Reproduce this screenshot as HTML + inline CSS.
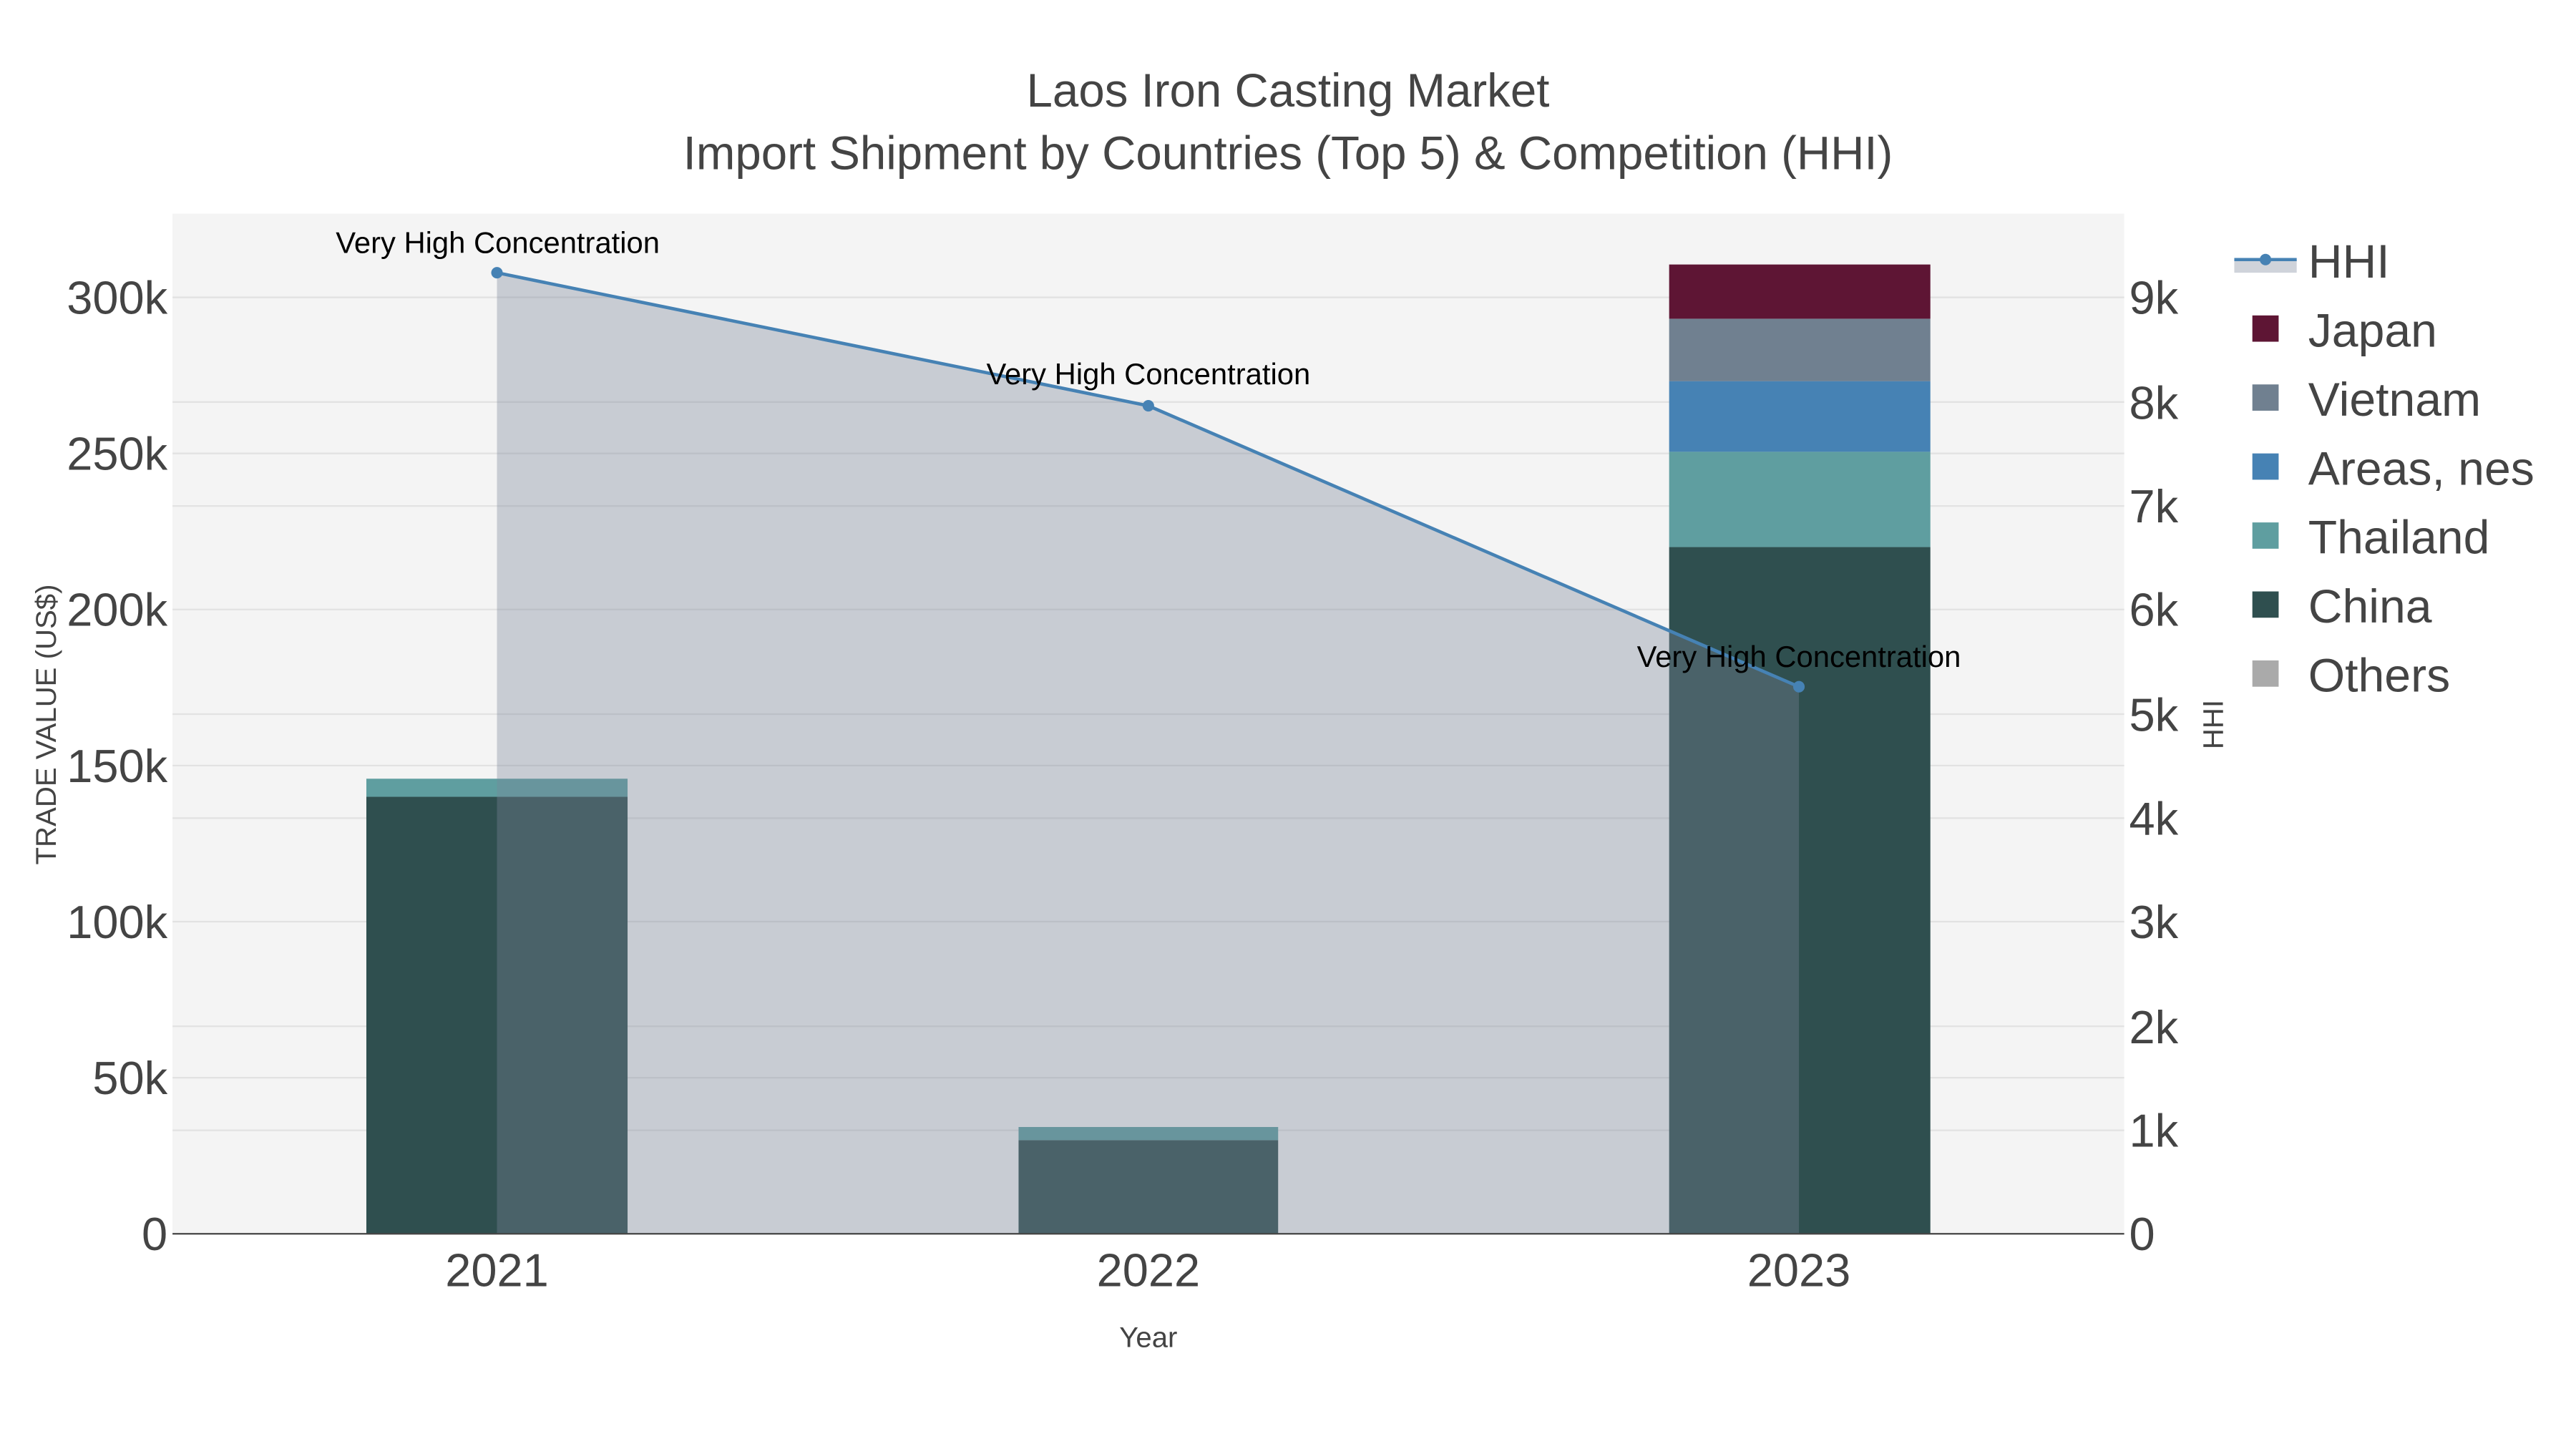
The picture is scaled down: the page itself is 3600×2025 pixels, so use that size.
<!DOCTYPE html>
<html><head><meta charset="utf-8"><style>html,body{margin:0;padding:0;background:#fff}svg{display:block}</style></head><body>
<svg width="3600" height="2025" viewBox="0 0 1568 882" xmlns="http://www.w3.org/2000/svg" font-family="Liberation Sans, sans-serif">
<rect width="1568" height="882" fill="#fff"/>
<rect x="105" y="130" width="1188" height="621" fill="#f4f4f4"/>
<g stroke="#e2e2e2" stroke-width="1">
<line x1="105" x2="1293" y1="656" y2="656"/><line x1="105" x2="1293" y1="561" y2="561"/><line x1="105" x2="1293" y1="466" y2="466"/><line x1="105" x2="1293" y1="371" y2="371"/><line x1="105" x2="1293" y1="276" y2="276"/><line x1="105" x2="1293" y1="181" y2="181"/>
<line x1="105" x2="1293" y1="688" y2="688"/><line x1="105" x2="1293" y1="624.7" y2="624.7"/><line x1="105" x2="1293" y1="498" y2="498"/><line x1="105" x2="1293" y1="434.7" y2="434.7"/><line x1="105" x2="1293" y1="308" y2="308"/><line x1="105" x2="1293" y1="244.7" y2="244.7"/>
</g>
<rect x="223" y="485" width="159" height="266" fill="#2f4f4f"/>
<rect x="223" y="474" width="159" height="11" fill="#5f9ea0"/>
<rect x="620" y="694" width="158" height="57" fill="#2f4f4f"/>
<rect x="620" y="686" width="158" height="8" fill="#5f9ea0"/>
<rect x="1016" y="333" width="159" height="418" fill="#2f4f4f"/>
<rect x="1016" y="275" width="159" height="58" fill="#5f9ea0"/>
<rect x="1016" y="232" width="159" height="43" fill="#4682b4"/>
<rect x="1016" y="194" width="159" height="38" fill="#708090"/>
<rect x="1016" y="161" width="159" height="33" fill="#5e1534"/>
<polygon points="302.5,751 302.5,166 699,247 1095,418 1095,751" fill="rgba(122,133,152,0.36)"/>
<polyline points="302.5,166 699,247 1095,418" fill="none" stroke="#4682b4" stroke-width="2"/>
<g fill="#4682b4"><circle cx="302.5" cy="166" r="3.5"/><circle cx="699" cy="247" r="3.5"/><circle cx="1095" cy="418" r="3.5"/></g>
<line x1="105" x2="1293" y1="751" y2="751" stroke="#444" stroke-width="1"/>
<g font-size="18.2" fill="#000" text-anchor="middle"><text x="303" y="154">Very High Concentration</text><text x="699" y="234">Very High Concentration</text><text x="1095" y="406">Very High Concentration</text></g>
<g font-size="28.5" fill="#444" text-anchor="middle"><text x="784" y="65">Laos Iron Casting Market</text><text x="784" y="103">Import Shipment by Countries (Top 5) &amp; Competition (HHI)</text></g>
<g font-size="28.3" fill="#444" text-anchor="end">
<text x="102" y="761">0</text><text x="102" y="666">50k</text><text x="102" y="571">100k</text><text x="102" y="476">150k</text><text x="102" y="381">200k</text><text x="102" y="286">250k</text><text x="102" y="191">300k</text></g>
<g font-size="28.3" fill="#444">
<text x="1296" y="761">0</text><text x="1296" y="698">1k</text><text x="1296" y="635">2k</text><text x="1296" y="571">3k</text><text x="1296" y="508">4k</text><text x="1296" y="445">5k</text><text x="1296" y="381">6k</text><text x="1296" y="318">7k</text><text x="1296" y="255">8k</text><text x="1296" y="191">9k</text></g>
<g font-size="28.3" fill="#444" text-anchor="middle"><text x="302.5" y="783">2021</text><text x="699" y="783">2022</text><text x="1095" y="783">2023</text></g>
<text x="699" y="820" font-size="17.5" fill="#444" text-anchor="middle">Year</text>
<text transform="translate(34,441) rotate(-90)" font-size="17.5" fill="#444" text-anchor="middle">TRADE VALUE (US$)</text>
<text transform="translate(1353,441) rotate(-90)" font-size="17.5" fill="#444" text-anchor="middle">HHI</text>
<rect x="1360" y="158" width="38" height="8" fill="rgba(122,133,152,0.36)"/>
<line x1="1360" x2="1398" y1="158" y2="158" stroke="#4682b4" stroke-width="2"/><circle cx="1379" cy="158" r="3.5" fill="#4682b4"/>
<rect x="1371" y="192" width="16" height="16" fill="#5e1534"/>
<rect x="1371" y="234" width="16" height="16" fill="#708090"/>
<rect x="1371" y="276" width="16" height="16" fill="#4682b4"/>
<rect x="1371" y="318" width="16" height="16" fill="#5f9ea0"/>
<rect x="1371" y="360" width="16" height="16" fill="#2f4f4f"/>
<rect x="1371" y="402" width="16" height="16" fill="#aaaaaa"/>
<g font-size="28.8" fill="#444"><text x="1405" y="169">HHI</text><text x="1405" y="211">Japan</text><text x="1405" y="253">Vietnam</text><text x="1405" y="295">Areas, nes</text><text x="1405" y="337">Thailand</text><text x="1405" y="379">China</text><text x="1405" y="421">Others</text></g>
</svg>
</body></html>
